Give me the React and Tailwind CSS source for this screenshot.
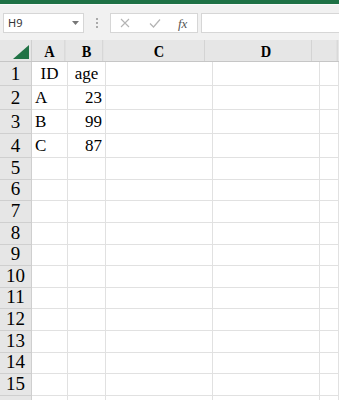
export default function App() {
  const cols = [
    { k: 'A', w: 'w-[36px]' },
    { k: 'B', w: 'w-[38px]' },
    { k: 'C', w: 'w-[107px]' },
    { k: 'D', w: 'w-[107px]' },
    { k: '', w: 'flex-1' },
  ];
  const data = {
    1: [{ t: 'ID', a: 'justify-center' }, { t: 'age', a: 'justify-center' }],
    2: [{ t: 'A', a: 'justify-start' }, { t: '23', a: 'justify-end' }],
    3: [{ t: 'B', a: 'justify-start' }, { t: '99', a: 'justify-end' }],
    4: [{ t: 'C', a: 'justify-start' }, { t: '87', a: 'justify-end' }],
  };
  const rows = Array.from({ length: 16 }, (_, i) => i + 1);

  return (
    <div className="w-[339px] h-[400px] overflow-hidden bg-white font-['Liberation_Serif',serif] text-black">
      <div className="h-[4px] bg-[#1e7145]" />
      <div className="h-[1px] bg-[#fafafa]" />
      {/* formula bar */}
      <div className="h-[35px] bg-[#f1f1f1] flex items-start pt-[8px] pl-[3px]">
        <div className="w-[81px] h-[20px] bg-white border border-[#d6d6d6] flex items-center pl-[4px] pr-[4px] font-['Noto_Sans',sans-serif] text-[11px] text-[#333]">
          <span className="flex-1">H9</span>
          <svg width="7" height="4" viewBox="0 0 7 4"><path d="M0 0h7L3.5 4z" fill="#777" /></svg>
        </div>
        <div className="w-[26px] h-[20px] flex flex-col items-center justify-center gap-[2px]">
          <span className="w-[2px] h-[2px] bg-[#aaa]" />
          <span className="w-[2px] h-[2px] bg-[#aaa]" />
          <span className="w-[2px] h-[2px] bg-[#aaa]" />
        </div>
        <div className="w-[88px] h-[20px] bg-white border border-[#d6d6d6] flex items-center">
          <svg className="ml-[9px]" width="10" height="10" viewBox="0 0 10 10">
            <path d="M1 1l8 8M9 1l-8 8" stroke="#b4b4b4" strokeWidth="1.1" fill="none" />
          </svg>
          <svg className="ml-[19px]" width="12" height="10" viewBox="0 0 12 10">
            <path d="M1 5.5l3.5 3.5L11 1.5" stroke="#b4b4b4" strokeWidth="1.2" fill="none" />
          </svg>
          <span className="ml-[17px] italic text-[13px] text-[#555] leading-none">fx</span>
        </div>
        <div className="flex-1 h-[20px] ml-[3px] bg-white border border-r-0 border-[#d6d6d6]" />
      </div>
      {/* column header */}
      <div className="flex h-[22px] bg-[#e6e6e6] border-b border-[#c6c6c6]">
        <div className="w-[32px] relative border-r border-[#d0d0d0]">
          <svg className="absolute left-[13px] top-[5px]" width="16" height="14" viewBox="0 0 16 14">
            <path d="M16 0V14H0z" fill="#217346" />
          </svg>
        </div>
        {cols.map((c, i) => (
          <div
            key={i}
            className={`${c.w} border-r border-[#d0d0d0] flex items-end justify-center pb-[1px] text-[17px] font-bold leading-none scale-x-[0.85]`}
          >
            {c.k}
          </div>
        ))}
      </div>
      {/* body */}
      {rows.map((r) => (
        <div key={r} className={`flex ${r <= 4 ? 'h-[24px]' : 'h-[21.64px]'}`}>
          <div className="w-[32px] bg-[#e6e6e6] border-r border-b border-[#cfcfcf] flex items-end justify-center pb-[2px] text-[19px] leading-none">
            {r <= 15 ? r : ''}
          </div>
          {cols.map((c, ci) => {
            const cell = data[r] && data[r][ci];
            return (
              <div
                key={ci}
                className={`${c.w} border-r border-b border-[#e1e1e1] flex items-end px-[3px] pb-[3px] text-[17px] leading-none ${cell ? cell.a : ''}`}
              >
                {cell ? cell.t : ''}
              </div>
            );
          })}
        </div>
      ))}
    </div>
  );
}
